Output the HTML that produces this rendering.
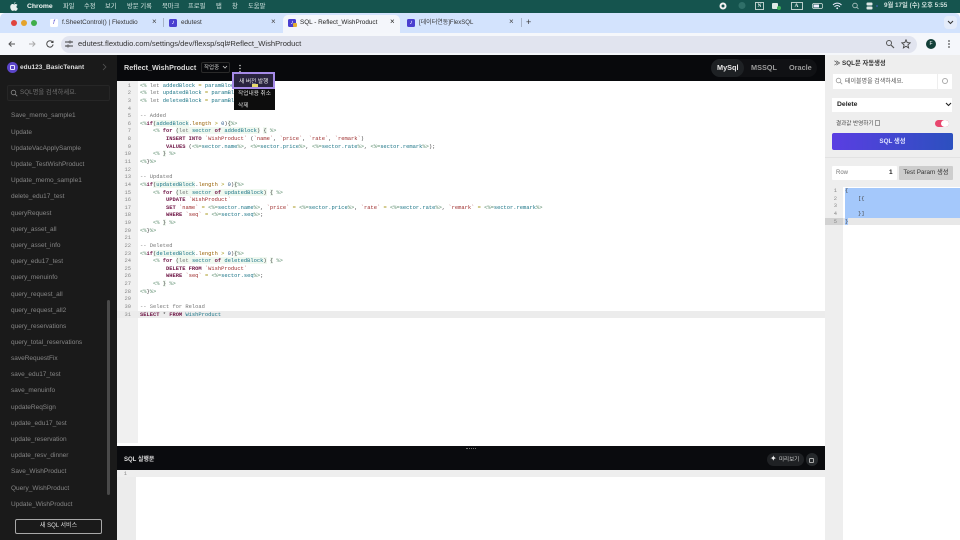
<!DOCTYPE html>
<html lang="ko"><head><meta charset="utf-8"><title>SQL - Reflect_WishProduct</title>
<style>
*{box-sizing:border-box}
html,body{margin:0;padding:0;width:960px;height:540px;overflow:hidden;background:#fff;font-family:"Liberation Sans","Noto Sans CJK KR",sans-serif}
.a{position:absolute;white-space:nowrap}
.m{font-size:6.3px;color:#d5e5e2;top:2px;line-height:10px}
.t{font-size:6.35px;color:#333;top:17.5px;line-height:10px}
.x{font-size:8px;color:#444;top:17px;line-height:10px}
.fav{width:8px;height:8px;border-radius:1.5px;background:#4a3fd0;top:18.5px;color:#fff;font-size:6px;line-height:8px;text-align:center;font-style:italic}
.s{left:11px;font-size:6.5px;color:#858585;line-height:10px;margin-top:.6px}
.c{left:140px;font:5.42px/7.63px "Liberation Mono",monospace;color:#444;white-space:pre;height:7.63px;margin-top:.5px}
.n{left:117px;width:14px;text-align:right;font:5.42px/7.63px "Liberation Mono",monospace;color:#888;margin-top:.5px}
.k{color:#6f1646;font-weight:bold}.v{color:#1a7486}.g{color:#5f8f70}.p{color:#2d5a8a}.o{color:#a89a20}.s2{color:#9c2a2a}.r{color:#777}.u{color:#9a6408}
.hl{background:#f0f9f0}
</style></head><body>
<!-- mac menu bar -->
<div class="a" style="left:0;top:0;width:960px;height:13px;background:#15544e"></div>
<svg class="a" style="left:10px;top:1.500px" width="8" height="9" viewBox="0 0 16 18"><path fill="#e8f0ee" d="M11 0c0 2-1.500 3.500-3 3.500C8 2 9.500.4 11 0zM8 4.800c1 0 2-.8 3.500-.8 1.300 0 2.700.7 3.500 2-3 1.800-2.500 5.800.7 7-.9 2.200-2.500 4.800-4 4.800-1.200 0-1.700-.8-3.200-.8s-2 .8-3.200.8C3 17.800.5 13.500.5 10 .5 6.300 2.800 4.100 5 4.100c1.300 0 2.300.7 3 .7z"/></svg>
<div class="a m" style="left:27px;font-weight:bold;font-size:6.800px;color:#f2f6f5">Chrome</div>
<div class="a m" style="left:63px">파일</div><div class="a m" style="left:84px">수정</div><div class="a m" style="left:105px">보기</div><div class="a m" style="left:127px">방문 기록</div><div class="a m" style="left:162px">북마크</div><div class="a m" style="left:188px">프로필</div><div class="a m" style="left:216px">탭</div><div class="a m" style="left:232px">창</div><div class="a m" style="left:248px">도움말</div>
<svg class="a" style="left:715px;top:0" width="165" height="13" viewBox="715 0 165 13">
<circle cx="723" cy="6" r="3.500" fill="#f2f2f2"/><circle cx="723" cy="6" r="1.500" fill="#15544e"/>
<circle cx="742" cy="5.500" r="3.500" fill="#2f6f68"/>
<rect x="755.500" y="2.500" width="8" height="7" fill="none" stroke="#e4ecea" stroke-width=".8"/>
<rect x="772" y="3" width="6" height="6" rx="1" fill="#dfe8e6"/><circle cx="779" cy="8" r="2" fill="#3fae5a"/>
<rect x="791.500" y="2.500" width="11" height="7" fill="none" stroke="#e4ecea" stroke-width=".8"/>
<rect x="812.500" y="3.500" width="10" height="5" rx="1.500" fill="none" stroke="#dfe8e6" stroke-width=".7"/><rect x="813.500" y="4.500" width="5.500" height="3" fill="#eef"/>
<path d="M833 5c2.500-2.500 6-2.500 8.500 0M834.500 6.700c1.700-1.500 3.800-1.500 5.500 0" stroke="#eef" stroke-width="1" fill="none"/><circle cx="837.200" cy="8.300" r=".9" fill="#eef"/>
<circle cx="855" cy="5.500" r="2.300" fill="none" stroke="#b8cbc8" stroke-width=".8"/><path d="M856.700 7.200l1.800 1.800" stroke="#b8cbc8" stroke-width=".8"/>
<rect x="866.500" y="2.500" width="6" height="3" rx="1" fill="#dfe8e6"/><rect x="866.500" y="6.500" width="6" height="3" rx="1" fill="#dfe8e6"/><circle cx="877" cy="6" r="1" fill="#3a5fa0"/>
</svg>
<div class="a" style="left:757.500px;top:1.500px;font:bold 5.500px/9px 'Liberation Serif',serif;color:#e4ecea">N</div>
<div class="a" style="left:794.500px;top:1.500px;font:bold 5.500px/9px 'Liberation Serif',serif;color:#e4ecea">A</div>
<div class="a" style="left:884px;top:1px;font-size:6.300px;line-height:10px;color:#cfe0dd;font-weight:bold">9월 17일 (수) 오후 5:55</div>

<!-- tab strip -->
<div class="a" style="left:0;top:13px;width:960px;height:20px;background:#d3e3fd;border-radius:5px 5px 0 0"></div>
<div class="a" style="left:10.500px;top:19.500px;width:6px;height:6px;border-radius:50%;background:#e0443e"></div>
<div class="a" style="left:20.500px;top:19.500px;width:6px;height:6px;border-radius:50%;background:#e5a32c"></div>
<div class="a" style="left:30.500px;top:19.500px;width:6px;height:6px;border-radius:50%;background:#3fae4a"></div>
<div class="a fav" style="left:50px;background:#fff;color:#4a3fd0">f</div>
<div class="a t" style="left:62px">f.SheetControl() | Flextudio</div>
<div class="a x" style="left:152px">×</div>
<div class="a" style="left:163px;top:18px;width:1px;height:9px;background:#a8b4c8"></div>
<div class="a fav" style="left:169px">♪</div>
<div class="a t" style="left:181px">edutest</div>
<div class="a x" style="left:271px">×</div>
<div class="a" style="left:283px;top:15px;width:117px;height:18px;background:#f4f6fb;border-radius:5px 5px 0 0"></div>
<div class="a fav" style="left:288px">♪</div>
<div class="a" style="left:293px;top:23px;width:4px;height:4px;background:#e5b030;border-radius:1px"></div>
<div class="a t" style="left:300px;color:#222">SQL - Reflect_WishProduct</div>
<div class="a x" style="left:390px;color:#222">×</div>
<div class="a fav" style="left:407px">♪</div>
<div class="a t" style="left:419px;font-size:6px">[데이터연동]FlexSQL</div>
<div class="a x" style="left:509px">×</div>
<div class="a" style="left:520.500px;top:18px;width:1px;height:9px;background:#a8b4c8"></div>
<div class="a" style="left:526px;top:17px;font-size:9px;line-height:10px;color:#333">+</div>
<div class="a" style="left:944px;top:16px;width:13px;height:13px;background:#e4ecfa;border-radius:4px"></div>
<svg class="a" style="left:947px;top:20px" width="7" height="5"><path d="M1 1l2.500 2.500L6 1" stroke="#333" stroke-width="1" fill="none"/></svg>

<!-- toolbar -->
<div class="a" style="left:0;top:33px;width:960px;height:22px;background:#f5f7fb"></div>
<div class="a" style="left:61px;top:36px;width:856px;height:17px;border-radius:9px;background:#e1e4ef"></div>
<svg class="a" style="left:6px;top:38px" width="56" height="12" viewBox="0 0 56 12">
<path d="M9 6H3M5.500 3.500L3 6l2.500 2.500" stroke="#555" stroke-width="1" fill="none"/>
<path d="M23 6h6M26.500 3.500L29 6l-2.500 2.500" stroke="#aaa" stroke-width="1" fill="none"/>
<path d="M46.500 4a3.200 3.200 0 1 0 .6 2.500M47 2.700V4.500h-1.800" stroke="#444" stroke-width="1" fill="none"/>
</svg>
<svg class="a" style="left:64px;top:39px" width="10" height="10"><path d="M1 3h4M7 3h2M1 7h2M5 7h4" stroke="#444" stroke-width="1"/><circle cx="6" cy="3" r="1" fill="none" stroke="#444" stroke-width=".7"/><circle cx="4" cy="7" r="1" fill="none" stroke="#444" stroke-width=".7"/></svg>
<div class="a" style="left:78px;top:39px;font-size:7.600px;line-height:10px;color:#333">edutest.flextudio.com/settings/dev/flexsp/sql#Reflect_WishProduct</div>
<svg class="a" style="left:885px;top:39px" width="10" height="10"><circle cx="4" cy="4" r="2.500" fill="none" stroke="#555" stroke-width="1"/><path d="M6 6l3 3" stroke="#555" stroke-width="1.200"/></svg>
<svg class="a" style="left:901px;top:39px" width="10" height="10" viewBox="0 0 10 10"><path d="M5 .8l1.200 2.800 3 .3-2.300 2 .7 3L5 7.300 2.400 8.900l.7-3-2.300-2 3-.3z" fill="none" stroke="#444" stroke-width=".9"/></svg>
<div class="a" style="left:926px;top:39px;width:10px;height:10px;border-radius:50%;background:#123f38;color:#fff;font-size:5px;line-height:10px;text-align:center">F</div>
<svg class="a" style="left:947px;top:39px" width="4" height="10"><circle cx="2" cy="2" r=".9" fill="#555"/><circle cx="2" cy="5" r=".9" fill="#555"/><circle cx="2" cy="8" r=".9" fill="#555"/></svg>

<!-- sidebar -->
<div class="a" style="left:0;top:55px;width:117px;height:485px;background:#1a1a1a"></div>
<div class="a" style="left:7px;top:62px;width:11px;height:11px;border-radius:50%;background:#5b45c8"></div>
<div class="a" style="left:10px;top:65px;width:5px;height:5px;border:1px solid #e8e4ff;border-radius:1px"></div>
<div class="a" style="left:20px;top:62px;font-size:6.500px;line-height:11px;font-weight:bold;color:#ddd">edu123_BasicTenant</div>
<svg class="a" style="left:102px;top:63px" width="5" height="8"><path d="M1 1l3 3-3 3" stroke="#555" stroke-width=".8" fill="none"/></svg>
<div class="a" style="left:7px;top:85px;width:103px;height:16px;border:1px solid #262626;border-radius:2px;background:#1c1c1c"></div>
<svg class="a" style="left:10px;top:89px" width="8" height="8"><circle cx="3.500" cy="3.500" r="2.300" fill="none" stroke="#888" stroke-width=".8"/><path d="M5.200 5.200l2 2" stroke="#888" stroke-width=".8"/></svg>
<div class="a" style="left:20px;top:88px;font-size:6.300px;line-height:10px;color:#6e6e6e">SQL명을 검색하세요.</div>
<div class="a s" style="top:110px">Save_memo_sample1</div>
<div class="a s" style="top:127px">Update</div>
<div class="a s" style="top:143px">UpdateVacApplySample</div>
<div class="a s" style="top:159px">Update_TestWishProduct</div>
<div class="a s" style="top:175px">Update_memo_sample1</div>
<div class="a s" style="top:191px">delete_edu17_test</div>
<div class="a s" style="top:208px">queryRequest</div>
<div class="a s" style="top:224px">query_asset_all</div>
<div class="a s" style="top:240px">query_asset_info</div>
<div class="a s" style="top:256px">query_edu17_test</div>
<div class="a s" style="top:272px">query_menuinfo</div>
<div class="a s" style="top:289px">query_request_all</div>
<div class="a s" style="top:305px">query_request_all2</div>
<div class="a s" style="top:321px">query_reservations</div>
<div class="a s" style="top:337px">query_total_reservations</div>
<div class="a s" style="top:353px">saveRequestFix</div>
<div class="a s" style="top:369px">save_edu17_test</div>
<div class="a s" style="top:385px">save_menuinfo</div>
<div class="a s" style="top:402px">updateReqSign</div>
<div class="a s" style="top:418px">update_edu17_test</div>
<div class="a s" style="top:434px">update_reservation</div>
<div class="a s" style="top:450px">update_resv_dinner</div>
<div class="a s" style="top:466px">Save_WishProduct</div>
<div class="a s" style="top:483px">Query_WishProduct</div>
<div class="a s" style="top:499px">Update_WishProduct</div>
<div class="a" style="left:107px;top:300px;width:2.500px;height:195px;border-radius:2px;background:#4a4a4a"></div>
<div class="a" style="left:15px;top:519px;width:87px;height:15px;border:1px solid #a8a8a8;border-radius:2px;text-align:center;font-size:6px;line-height:13px;color:#ddd">새 SQL 서비스</div>

<!-- main header -->
<div class="a" style="left:117px;top:55px;width:708px;height:26px;background:#08090c"></div>
<div class="a" style="left:124px;top:62px;font-size:7.200px;line-height:12px;font-weight:bold;color:#d8d8d8">Reflect_WishProduct</div>
<div class="a" style="left:200.500px;top:62px;width:29.500px;height:11px;border:1px solid #2a2a2a;border-radius:2px"></div>
<div class="a" style="left:204px;top:64px;font-size:5.500px;line-height:9px;color:#ccc">작업중</div>
<svg class="a" style="left:222px;top:65px" width="6" height="5"><path d="M1 1l2 2 2-2" stroke="#ccc" stroke-width=".8" fill="none"/></svg>
<svg class="a" style="left:238px;top:64px" width="4" height="9"><circle cx="2" cy="1.500" r=".8" fill="#ccc"/><circle cx="2" cy="4.500" r=".8" fill="#ccc"/><circle cx="2" cy="7.500" r=".8" fill="#ccc"/></svg>
<div class="a" style="left:711px;top:59px;width:106px;height:18px;border-radius:9px;background:#101114"></div>
<div class="a" style="left:711px;top:59px;width:33px;height:18px;border-radius:9px;background:#1e2124"></div>
<div class="a" style="left:717px;top:63px;font-size:7.300px;line-height:10px;font-weight:bold;color:#e8e8e8">MySql</div>
<div class="a" style="left:751px;top:63px;font-size:7.300px;line-height:10px;font-weight:bold;color:#9a9a9a">MSSQL</div>
<div class="a" style="left:789px;top:63px;font-size:7.300px;line-height:10px;font-weight:bold;color:#9a9a9a">Oracle</div>

<!-- editor -->
<div class="a" style="left:117px;top:81px;width:708px;height:365px;background:#fff"></div>
<div class="a" style="left:117px;top:81px;width:21px;height:362px;background:#f0f0f0"></div>
<div class="a" style="left:117px;top:310.600px;width:708px;height:7.630px;background:#ececec"></div>
<div class="a n" style="top:81.200px">1</div><div class="a c" style="top:81.200px"><span class="g">&lt;% </span><span class="r">let</span> <span class="v">addedBlock</span> <span class="o">=</span> <span class="v">paramBlock</span></div>
<div class="a n" style="top:88.830px">2</div><div class="a c" style="top:88.830px"><span class="g">&lt;% </span><span class="r">let</span> <span class="v">updatedBlock</span> <span class="o">=</span> <span class="v">paramBl</span></div>
<div class="a n" style="top:96.460px">3</div><div class="a c" style="top:96.460px"><span class="g">&lt;% </span><span class="r">let</span> <span class="v">deletedBlock</span> <span class="o">=</span> <span class="v">paramBl</span></div>
<div class="a n" style="top:104.090px">4</div>
<div class="a n" style="top:111.720px">5</div><div class="a c" style="top:111.720px"><span class="r">-- Added</span></div>
<div class="a n" style="top:119.350px">6</div><div class="a c" style="top:119.350px"><span class="g">&lt;%</span><span class="k">if</span><span class="hl">(<span class="v">addedBlock</span></span>.<span class="u">length</span> <span class="o">&gt;</span> <span class="p">0</span>)<span class="hl">{</span><span class="g">%&gt;</span></div>
<div class="a n" style="top:126.980px">7</div><div class="a c" style="top:126.980px">    <span class="g">&lt;% </span><span class="k">for</span> <span class="hl">(<span class="r">let</span> <span class="v">sector</span> <span class="k">of</span> <span class="v">addedBlock</span>)</span> <span class="hl">{</span> <span class="g">%&gt;</span></div>
<div class="a n" style="top:134.610px">8</div><div class="a c" style="top:134.610px">        <span class="k">INSERT INTO</span> <span class="s2">`WishProduct`</span> (<span class="s2">`name`</span>, <span class="s2">`price`</span>, <span class="s2">`rate`</span>, <span class="s2">`remark`</span>)</div>
<div class="a n" style="top:142.240px">9</div><div class="a c" style="top:142.240px">        <span class="k">VALUES</span> (<span class="g">&lt;%=</span><span class="v">sector.name</span><span class="g">%&gt;</span>, <span class="g">&lt;%=</span><span class="v">sector.price</span><span class="g">%&gt;</span>, <span class="g">&lt;%=</span><span class="v">sector.rate</span><span class="g">%&gt;</span>, <span class="g">&lt;%=</span><span class="v">sector.remark</span><span class="g">%&gt;</span>);</div>
<div class="a n" style="top:149.870px">10</div><div class="a c" style="top:149.870px">    <span class="g">&lt;% </span><span class="hl">}</span> <span class="g">%&gt;</span></div>
<div class="a n" style="top:157.500px">11</div><div class="a c" style="top:157.500px"><span class="g">&lt;%</span>}<span class="g">%&gt;</span></div>
<div class="a n" style="top:165.130px">12</div>
<div class="a n" style="top:172.760px">13</div><div class="a c" style="top:172.760px"><span class="r">-- Updated</span></div>
<div class="a n" style="top:180.390px">14</div><div class="a c" style="top:180.390px"><span class="g">&lt;%</span><span class="k">if</span><span class="hl">(<span class="v">updatedBlock</span></span>.<span class="u">length</span> <span class="o">&gt;</span> <span class="p">0</span>)<span class="hl">{</span><span class="g">%&gt;</span></div>
<div class="a n" style="top:188.020px">15</div><div class="a c" style="top:188.020px">    <span class="g">&lt;% </span><span class="k">for</span> <span class="hl">(<span class="r">let</span> <span class="v">sector</span> <span class="k">of</span> <span class="v">updatedBlock</span>)</span> <span class="hl">{</span> <span class="g">%&gt;</span></div>
<div class="a n" style="top:195.650px">16</div><div class="a c" style="top:195.650px">        <span class="k">UPDATE</span> <span class="s2">`WishProduct`</span></div>
<div class="a n" style="top:203.280px">17</div><div class="a c" style="top:203.280px">        <span class="k">SET</span> <span class="s2">`name`</span> <span class="o">=</span> <span class="g">&lt;%=</span><span class="v">sector.name</span><span class="g">%&gt;</span>, <span class="s2">`price`</span> <span class="o">=</span> <span class="g">&lt;%=</span><span class="v">sector.price</span><span class="g">%&gt;</span>, <span class="s2">`rate`</span> <span class="o">=</span> <span class="g">&lt;%=</span><span class="v">sector.rate</span><span class="g">%&gt;</span>, <span class="s2">`remark`</span> <span class="o">=</span> <span class="g">&lt;%=</span><span class="v">sector.remark</span><span class="g">%&gt;</span></div>
<div class="a n" style="top:210.910px">18</div><div class="a c" style="top:210.910px">        <span class="k">WHERE</span> <span class="s2">`seq`</span> <span class="o">=</span> <span class="g">&lt;%=</span><span class="v">sector.seq</span><span class="g">%&gt;</span>;</div>
<div class="a n" style="top:218.540px">19</div><div class="a c" style="top:218.540px">    <span class="g">&lt;% </span><span class="hl">}</span> <span class="g">%&gt;</span></div>
<div class="a n" style="top:226.170px">20</div><div class="a c" style="top:226.170px"><span class="g">&lt;%</span>}<span class="g">%&gt;</span></div>
<div class="a n" style="top:233.800px">21</div>
<div class="a n" style="top:241.430px">22</div><div class="a c" style="top:241.430px"><span class="r">-- Deleted</span></div>
<div class="a n" style="top:249.060px">23</div><div class="a c" style="top:249.060px"><span class="g">&lt;%</span><span class="k">if</span><span class="hl">(<span class="v">deletedBlock</span></span>.<span class="u">length</span> <span class="o">&gt;</span> <span class="p">0</span>)<span class="hl">{</span><span class="g">%&gt;</span></div>
<div class="a n" style="top:256.690px">24</div><div class="a c" style="top:256.690px">    <span class="g">&lt;% </span><span class="k">for</span> <span class="hl">(<span class="r">let</span> <span class="v">sector</span> <span class="k">of</span> <span class="v">deletedBlock</span>)</span> <span class="hl">{</span> <span class="g">%&gt;</span></div>
<div class="a n" style="top:264.320px">25</div><div class="a c" style="top:264.320px">        <span class="k">DELETE FROM</span> <span class="s2">`WishProduct`</span></div>
<div class="a n" style="top:271.950px">26</div><div class="a c" style="top:271.950px">        <span class="k">WHERE</span> <span class="s2">`seq`</span> <span class="o">=</span> <span class="g">&lt;%=</span><span class="v">sector.seq</span><span class="g">%&gt;</span>;</div>
<div class="a n" style="top:279.580px">27</div><div class="a c" style="top:279.580px">    <span class="g">&lt;% </span><span class="hl">}</span> <span class="g">%&gt;</span></div>
<div class="a n" style="top:287.210px">28</div><div class="a c" style="top:287.210px"><span class="g">&lt;%</span>}<span class="g">%&gt;</span></div>
<div class="a n" style="top:294.840px">29</div>
<div class="a n" style="top:302.470px">30</div><div class="a c" style="top:302.470px"><span class="r">-- Select for Reload</span></div>
<div class="a n" style="top:310.100px">31</div><div class="a c" style="top:310.100px"><span class="k">SELECT</span> * <span class="k">FROM</span> <span class="v">WishProduct</span></div>

<!-- dropdown -->
<div class="a" style="left:234px;top:72px;width:41px;height:38px;background:#0d0d0d"></div>
<div class="a" style="left:232px;top:72px;width:43px;height:17px;border:2.500px solid #a68be8;background:#2a2440"></div>
<div class="a" style="left:239px;top:77px;font-size:5.700px;line-height:10px;color:#e8e8e8">새 버전 발행</div>
<div class="a" style="left:252px;top:84px;width:6px;height:3px;background:#e5d86a"></div>
<div class="a" style="left:238px;top:89px;font-size:5.700px;line-height:10px;color:#ddd">작업내용 취소</div>
<div class="a" style="left:238px;top:101px;font-size:5.700px;line-height:10px;color:#ddd">삭제</div>

<!-- result bar -->
<div class="a" style="left:117px;top:446px;width:708px;height:24px;background:#0a0b0e"></div>
<div class="a" style="left:466px;top:448px;width:10px;height:1px;border-top:1px dotted #777"></div>
<div class="a" style="left:124px;top:455px;font-size:6px;line-height:10px;font-weight:bold;color:#ddd">SQL 실행문</div>
<div class="a" style="left:767px;top:453px;width:37px;height:13px;border-radius:7px;background:#1f2124"></div>
<div class="a" style="left:770px;top:454px;font-size:8px;line-height:10px;color:#eee">✦</div>
<div class="a" style="left:779px;top:455px;font-size:5.500px;line-height:10px;color:#ccc">미리보기</div>
<div class="a" style="left:806px;top:453px;width:12px;height:13px;border-radius:6px;background:#25282b"></div>
<div class="a" style="left:809px;top:458px;width:5px;height:5px;border:1px solid #aaa;border-radius:1px"></div>
<div class="a" style="left:117px;top:470px;width:708px;height:70px;background:#fff"></div>
<div class="a" style="left:117px;top:470px;width:19px;height:70px;background:#ececec"></div>
<div class="a" style="left:117px;top:470px;width:708px;height:7px;background:#eeeeee"></div>
<div class="a n" style="top:469.500px;width:10px">1</div>

<!-- right panel -->
<div class="a" style="left:825px;top:55px;width:135px;height:485px;background:#eeeeee"></div>
<div class="a" style="left:834px;top:59px;font-size:6.300px;line-height:10px;font-weight:bold;color:#333">≫ SQL문 자동생성</div>
<div class="a" style="left:833px;top:74px;width:104px;height:15px;background:#fff"></div>
<svg class="a" style="left:835px;top:77px" width="8" height="8"><circle cx="3.500" cy="3.500" r="2.300" fill="none" stroke="#999" stroke-width=".8"/><path d="M5.200 5.200l2 2" stroke="#999" stroke-width=".8"/></svg>
<div class="a" style="left:845px;top:76.500px;font-size:6px;line-height:10px;color:#555">테이블명을 검색하세요.</div>
<div class="a" style="left:938px;top:74px;width:14px;height:15px;background:#fff"></div>
<div class="a" style="left:942px;top:78px;width:6px;height:6px;border:1px solid #aaa;border-radius:50%"></div>
<div class="a" style="left:832px;top:98px;width:120px;height:14px;background:#fff"></div>
<div class="a" style="left:837px;top:100px;font-size:6.800px;line-height:10px;font-weight:bold;color:#222">Delete</div>
<svg class="a" style="left:945px;top:102px" width="7" height="5"><path d="M1 1l2.500 2.500L6 1" stroke="#222" stroke-width="1.100" fill="none"/></svg>
<div class="a" style="left:836px;top:119px;font-size:5.600px;line-height:10px;color:#444">결과값 반영하기</div>
<div class="a" style="left:875px;top:120px;width:5px;height:6px;border:1px solid #999"></div>
<div class="a" style="left:935px;top:120px;width:14px;height:7px;border-radius:4px;background:#e8476e"></div>
<div class="a" style="left:941px;top:120px;width:8px;height:7px;border-radius:50%;background:#fff"></div>
<div class="a" style="left:832px;top:133px;width:121px;height:17px;border-radius:2px;background:linear-gradient(90deg,#5a3ee2,#2c50bf);text-align:center;font-size:6.300px;line-height:17px;font-weight:bold;color:#e0e4ff">SQL 생성</div>
<div class="a" style="left:825px;top:157px;width:135px;height:1px;background:#e2e2e2"></div>
<div class="a" style="left:832px;top:166px;width:65px;height:14px;background:#fff;border-radius:1px"></div>
<div class="a" style="left:836px;top:168px;font-size:6px;line-height:10px;color:#777">Row</div>
<div class="a" style="left:889px;top:168px;font-size:6.500px;line-height:10px;font-weight:bold;color:#222">1</div>
<div class="a" style="left:899px;top:166px;width:54px;height:14px;background:#cdcdcd;border-radius:1px;text-align:center;font-size:6.300px;line-height:14px;color:#333">Test Param 생성</div>
<div class="a" style="left:843px;top:187px;width:117px;height:353px;background:#fff"></div>
<div class="a" style="left:845px;top:187.700px;width:115px;height:30.300px;background:#a4c8fb"></div>
<div class="a" style="left:825px;top:218px;width:135px;height:7px;background:#e8e8e8"></div>
<div class="a" style="left:825px;top:218px;width:18px;height:7px;background:#d2d2d2"></div>
<div class="a" style="left:845px;top:218px;width:3px;height:7px;background:#a4c8fb"></div>
<div class="a n" style="left:825px;width:12px;top:186.500px">1</div><div class="a c" style="left:845px;top:186.500px">{</div>
<div class="a n" style="left:825px;width:12px;top:194.130px">2</div><div class="a c" style="left:845px;top:194.130px">    [{</div>
<div class="a n" style="left:825px;width:12px;top:201.760px">3</div>
<div class="a n" style="left:825px;width:12px;top:209.390px">4</div><div class="a c" style="left:845px;top:209.390px">    }]</div>
<div class="a n" style="left:825px;width:12px;top:217.020px">5</div><div class="a c" style="left:845px;top:217.020px">}</div>
</body></html>
